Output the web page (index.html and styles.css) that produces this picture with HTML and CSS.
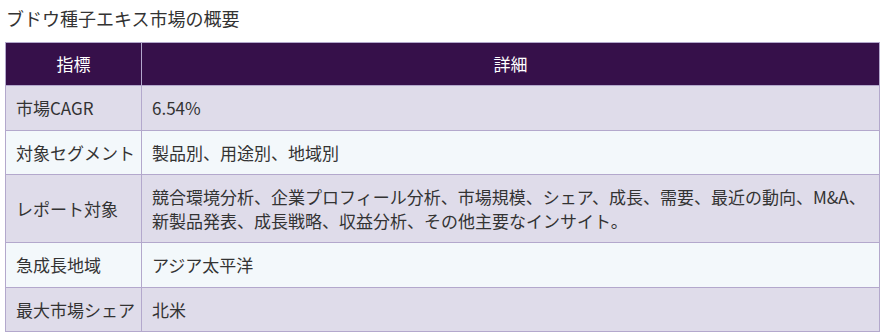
FILE: index.html
```html
<!DOCTYPE html>
<html lang="ja">
<head>
<meta charset="utf-8">
<link rel="stylesheet" href="styles.css">
</head>
<body>
<h3 class="title">ブドウ種子エキス市場の概要</h3>
<table class="summary">
  <thead>
    <tr><th class="col-key">指標</th><th>詳細</th></tr>
  </thead>
  <tbody>
    <tr class="odd"><td class="key">市場CAGR</td><td>6.54%</td></tr>
    <tr class="even"><td class="key">対象セグメント</td><td>製品別、用途別、地域別</td></tr>
    <tr class="odd"><td class="key">レポート対象</td><td>競合環境分析、企業プロフィール分析、市場規模、シェア、成長、需要、最近の動向、M&amp;A、新製品発表、成長戦略、収益分析、その他主要なインサイト。</td></tr>
    <tr class="even"><td class="key">急成長地域</td><td>アジア太平洋</td></tr>
    <tr class="odd"><td class="key">最大市場シェア</td><td>北米</td></tr>
  </tbody>
</table>
</body>
</html>
```

FILE: styles.css
```css
html, body {
  margin: 0;
  padding: 0;
  background: #ffffff;
}
body {
  padding: 0 10px 0 5px;
  font-family: "Noto Sans CJK JP", "Noto Sans", sans-serif;
  color: #333333;
}
.title {
  margin: 0;
  padding: 6px 0 0 1px;
  height: 42px;
  box-sizing: border-box;
  font-size: 18px;
  font-weight: normal;
  line-height: 24px;
  color: #333333;
}
.summary {
  width: 875px;
  table-layout: fixed;
  border-collapse: collapse;
  font-size: 17px;
  line-height: 23.5px;
}
.summary th,
.summary td {
  border: 1px solid #b3a8cc;
  padding: 10px 10px;
  text-align: left;
  vertical-align: middle;
}
.summary th {
  background: #36104a;
  color: #ffffff;
  font-weight: normal;
  text-align: center;
  line-height: 24px;
  padding: 9px 10px 9px;
}
.summary .col-key {
  width: 136px;
  box-sizing: border-box;
}
.summary .key {
  white-space: nowrap;
  padding-right: 4px;
}
.summary tr.odd td {
  background: #dfdcea;
}
.summary tr.even td {
  background: #f3f8fb;
}
```
